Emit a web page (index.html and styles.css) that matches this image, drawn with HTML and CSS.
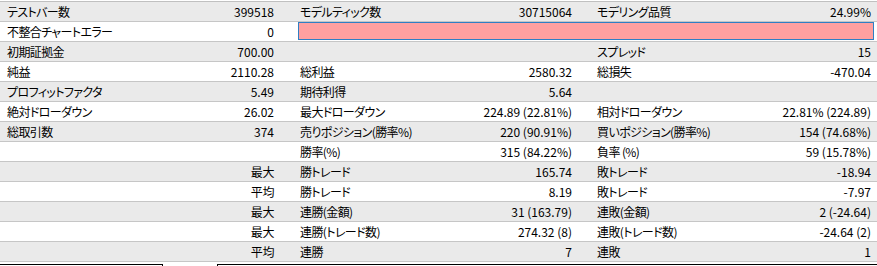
FILE: index.html
```html
<!DOCTYPE html>
<html lang="ja">
<head>
<meta charset="utf-8">
<title>レポート</title>
<link rel="stylesheet" href="styles.css">
</head>
<body>
<div class="report">
  <div class="row alt">
    <div class="cell p1"><span class="lbl">テストバー数</span><span>399518</span></div>
    <div class="cell p2"><span class="lbl">モデルティック数</span><span>30715064</span></div>
    <div class="cell p3"><span class="lbl">モデリング品質</span><span>24.99%</span></div>
  </div>
  <div class="row">
    <div class="cell p1"><span class="lbl">不整合チャートエラー</span><span>0</span></div>
    <div class="errbar"></div>
  </div>
  <div class="row alt">
    <div class="cell p1"><span class="lbl">初期証拠金</span><span>700.00</span></div>
    <div class="cell p2"></div>
    <div class="cell p3"><span class="lbl">スプレッド</span><span>15</span></div>
  </div>
  <div class="row">
    <div class="cell p1"><span class="lbl">純益</span><span>2110.28</span></div>
    <div class="cell p2"><span class="lbl">総利益</span><span>2580.32</span></div>
    <div class="cell p3"><span class="lbl">総損失</span><span>-470.04</span></div>
  </div>
  <div class="row alt">
    <div class="cell p1"><span class="lbl">プロフィットファクタ</span><span>5.49</span></div>
    <div class="cell p2"><span class="lbl">期待利得</span><span>5.64</span></div>
    <div class="cell p3"></div>
  </div>
  <div class="row">
    <div class="cell p1"><span class="lbl">絶対ドローダウン</span><span>26.02</span></div>
    <div class="cell p2"><span class="lbl">最大ドローダウン</span><span>224.89 (22.81%)</span></div>
    <div class="cell p3"><span class="lbl">相対ドローダウン</span><span>22.81% (224.89)</span></div>
  </div>
  <div class="row alt">
    <div class="cell p1"><span class="lbl">総取引数</span><span>374</span></div>
    <div class="cell p2"><span class="lbl">売りポジション(勝率%)</span><span>220 (90.91%)</span></div>
    <div class="cell p3"><span class="lbl">買いポジション(勝率%)</span><span>154 (74.68%)</span></div>
  </div>
  <div class="row">
    <div class="cell p1"></div>
    <div class="cell p2"><span class="lbl">勝率(%)</span><span>315 (84.22%)</span></div>
    <div class="cell p3"><span class="lbl">負率 (%)</span><span>59 (15.78%)</span></div>
  </div>
  <div class="row alt">
    <div class="cell p1"><span></span><span class="kj">最大</span></div>
    <div class="cell p2"><span class="lbl">勝トレード</span><span>165.74</span></div>
    <div class="cell p3"><span class="lbl">敗トレード</span><span>-18.94</span></div>
  </div>
  <div class="row">
    <div class="cell p1"><span></span><span class="kj">平均</span></div>
    <div class="cell p2"><span class="lbl">勝トレード</span><span>8.19</span></div>
    <div class="cell p3"><span class="lbl">敗トレード</span><span>-7.97</span></div>
  </div>
  <div class="row alt">
    <div class="cell p1"><span></span><span class="kj">最大</span></div>
    <div class="cell p2"><span class="lbl">連勝(金額)</span><span>31 (163.79)</span></div>
    <div class="cell p3"><span class="lbl">連敗(金額)</span><span>2 (-24.64)</span></div>
  </div>
  <div class="row">
    <div class="cell p1"><span></span><span class="kj">最大</span></div>
    <div class="cell p2"><span class="lbl">連勝(トレード数)</span><span>274.32 (8)</span></div>
    <div class="cell p3"><span class="lbl">連敗(トレード数)</span><span>-24.64 (2)</span></div>
  </div>
  <div class="row alt">
    <div class="cell p1"><span></span><span class="kj">平均</span></div>
    <div class="cell p2"><span class="lbl">連勝</span><span>7</span></div>
    <div class="cell p3"><span class="lbl">連敗</span><span>1</span></div>
  </div>
</div>
<div class="tabs">
  <div class="tab tab-left"></div>
  <div class="tab tab-right"></div>
</div>
</body>
</html>
```
FILE: styles.css
```css
html, body {
  margin: 0;
  padding: 0;
  background: #ffffff;
}
body {
  font-family: "Noto Sans CJK JP", "Noto Sans", sans-serif;
  font-size: 12px;
  font-feature-settings: "palt";
  color: #000;
  padding-top: 1px;
}
.report {
  border-top: 1px solid #c0c0c0;
}
.row {
  display: grid;
  grid-template-columns: 293px 297px 1fr;
  height: 19px;
  border-bottom: 1px solid #c6c6c6;
  background: #ffffff;
}
.row.alt {
  background: #eaeaea;
}
.cell {
  display: flex;
  justify-content: space-between;
  align-items: center;
  line-height: 19px;
  white-space: nowrap;
}
.lbl {
  letter-spacing: -0.6px;
}
.kj {
  letter-spacing: -0.4px;
}
.p1 { padding: 0 19px 0 7px; }
.p2 { padding: 0 18px 0 7px; }
.p3 { padding: 0 6px 0 7px; }
.errbar {
  grid-column: 2 / 4;
  margin: 0 3px 1px 5px;
  background: #ffa0a0;
  border: 1px solid #2f7fc4;
}
.tabs {
  display: flex;
  margin-top: 2px;
  height: 2px;
}
.tab {
  border-top: 1px solid #000;
}
.tab-left {
  width: 162px;
  border-right: 1px solid #000;
}
.tab-right {
  flex: 1;
  margin-left: 54px;
  border-left: 1px solid #000;
}
```
